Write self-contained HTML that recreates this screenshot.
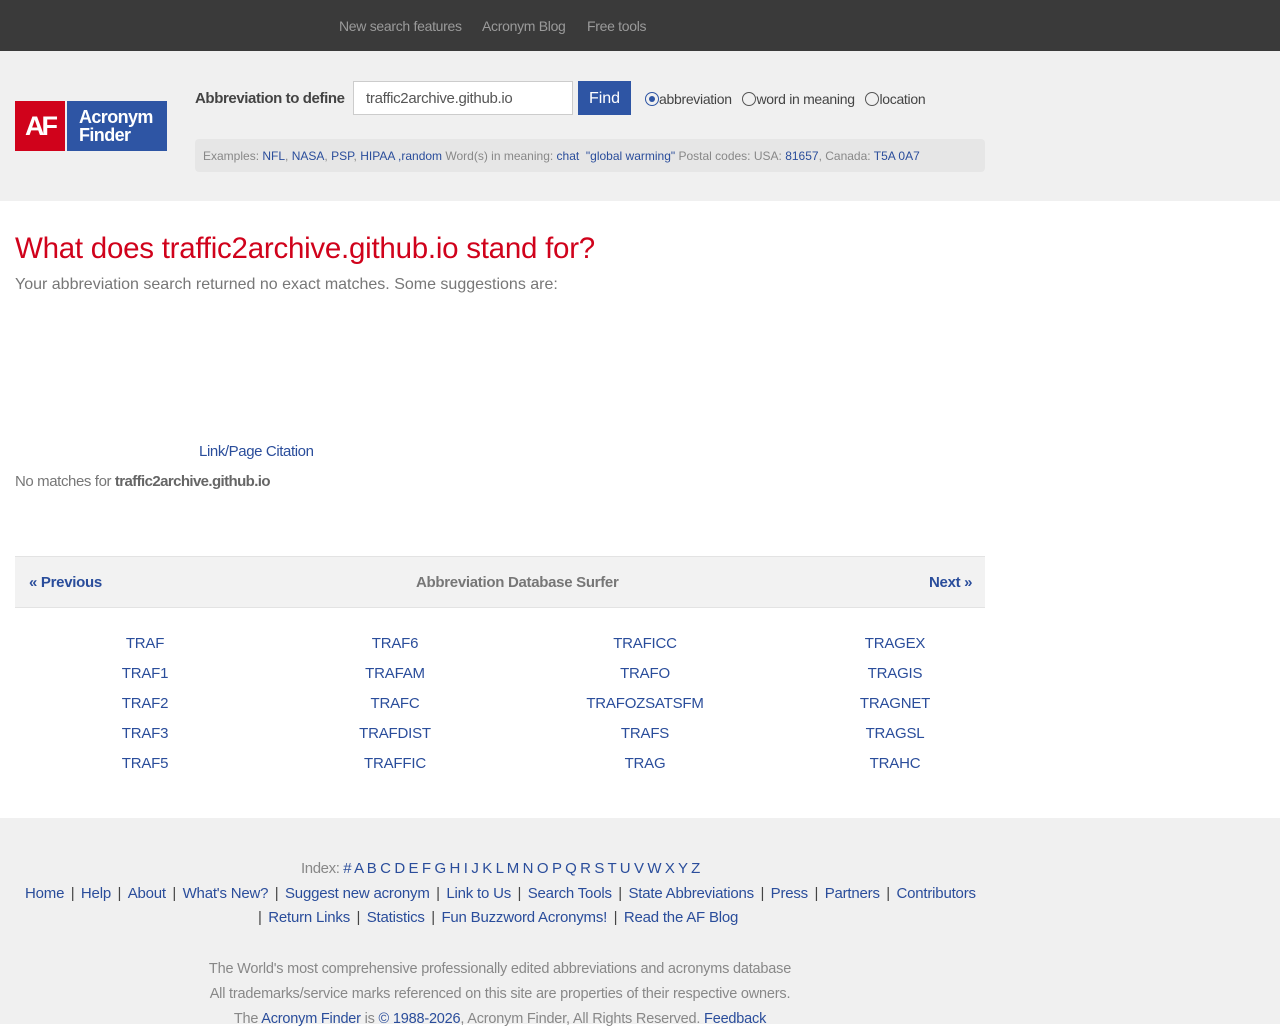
<!DOCTYPE html>
<html><head><meta charset="utf-8"><style>
*{margin:0;padding:0;box-sizing:border-box}
body{width:1280px;height:1024px;overflow:hidden;font-family:"Liberation Sans",Arial,sans-serif;background:#fff;position:relative;color:#666}
a{color:#2a4d9b;text-decoration:none}
.abs{position:absolute;white-space:nowrap}
.top{position:absolute;left:0;top:0;width:1280px;height:51px;background:#3a3a3a}
.top span{position:absolute;top:18px;font-size:14px;color:#9a9a9a;letter-spacing:-.3px}
.hdr{position:absolute;left:0;top:51px;width:1280px;height:150px;background:#f0f0f0}
.foot{position:absolute;left:0;top:818px;width:1280px;height:206px;background:#f0f0f0}
.grid a{position:absolute;font-size:15px;transform:translateX(-50%);white-space:nowrap;letter-spacing:-.2px}
.links{font-size:15px;letter-spacing:-.4px;color:#444}
.links a{color:#2a4d9b}
.sep{color:#444;margin:0 6px}
.l2{letter-spacing:-.2px}
.l2 .sep{margin:0 6.5px}
</style></head><body>
<div class="top"><span style="left:339px">New search features</span><span style="left:482px">Acronym Blog</span><span style="left:587px">Free tools</span></div>
<div class="hdr"></div>
<div class="abs" style="left:15px;top:101px;width:50px;height:50px;background:#d0021b;color:#fff;font-weight:bold;font-size:27px;letter-spacing:-3px;line-height:50px;text-align:center">AF</div>
<div class="abs" style="left:67px;top:101px;width:100px;height:50px;background:#2e55a4;color:#fff;font-weight:bold;font-size:18px;line-height:18px;padding:7px 0 0 12px;letter-spacing:-.6px">Acronym<br>Finder</div>
<div class="abs" style="left:195px;top:90px;font-size:15px;font-weight:bold;color:#444;letter-spacing:-.4px">Abbreviation to define</div>
<div class="abs" style="left:353px;top:81px;width:220px;height:34px;background:#fff;border:1px solid #ccc;font-size:15px;color:#555;padding:8px 12px;letter-spacing:-.3px">traffic2archive.github.io</div>
<div class="abs" style="left:578px;top:81px;width:53px;height:34px;background:#2e55a4;color:#fff;font-size:16px;line-height:36px;text-align:center">Find</div>
<div class="abs" style="left:645px;top:91px;font-size:14px;color:#444;letter-spacing:-.3px">
<span style="display:inline-block;width:14px;height:14px;border:1.5px solid #2e55a4;border-radius:50%;vertical-align:-2px;position:relative"><span style="position:absolute;left:2.5px;top:2.5px;width:6px;height:6px;border-radius:50%;background:#2e55a4"></span></span>abbreviation &nbsp;
<span style="display:inline-block;width:14px;height:14px;border:1.5px solid #555;border-radius:50%;vertical-align:-2px"></span>word in meaning &nbsp;
<span style="display:inline-block;width:14px;height:14px;border:1.5px solid #555;border-radius:50%;vertical-align:-2px"></span>location</div>
<div class="abs" style="left:195px;top:139px;width:790px;height:33px;background:#e6e6e6;border-radius:4px;font-size:12px;color:#888;padding:10px 8px">Examples: <a>NFL</a>, <a>NASA</a>, <a>PSP</a>, <a>HIPAA</a> <a>,random</a> Word(s) in meaning: <a>chat</a> &nbsp;<a>"global warming"</a> Postal codes: USA: <a>81657</a>, Canada: <a>T5A 0A7</a></div>
<div class="abs" style="left:15px;top:232px;font-size:29.5px;color:#d0021b;letter-spacing:-.25px">What does traffic2archive.github.io stand for?</div>
<div class="abs" style="left:15px;top:276px;font-size:16px;color:#777">Your abbreviation search returned no exact matches. Some suggestions are:</div>
<div class="abs" style="left:199px;top:443px;font-size:15px;letter-spacing:-.4px"><a>Link/Page Citation</a></div>
<div class="abs" style="left:15px;top:473px;font-size:15px;color:#777;letter-spacing:-.4px">No matches for <b style="color:#666;letter-spacing:-.6px">traffic2archive.github.io</b></div>
<div class="abs" style="left:15px;top:556px;width:970px;height:52px;background:#f2f2f2;border-top:1px solid #e3e3e3;border-bottom:1px solid #e3e3e3"></div>
<div class="abs" style="left:29px;top:574px;font-size:15px;font-weight:bold;letter-spacing:-.3px"><a>« Previous</a></div>
<div class="abs" style="left:416px;top:574px;font-size:15px;font-weight:bold;color:#777;letter-spacing:-.3px">Abbreviation Database Surfer</div>
<div class="abs" style="left:929px;top:574px;font-size:15px;font-weight:bold;letter-spacing:-.3px"><a>Next »</a></div>
<div class="grid">
<a style="left:145px;top:635px">TRAF</a><a style="left:145px;top:665px">TRAF1</a><a style="left:145px;top:695px">TRAF2</a><a style="left:145px;top:725px">TRAF3</a><a style="left:145px;top:755px">TRAF5</a>
<a style="left:395px;top:635px">TRAF6</a><a style="left:395px;top:665px">TRAFAM</a><a style="left:395px;top:695px">TRAFC</a><a style="left:395px;top:725px">TRAFDIST</a><a style="left:395px;top:755px">TRAFFIC</a>
<a style="left:645px;top:635px">TRAFICC</a><a style="left:645px;top:665px">TRAFO</a><a style="left:645px;top:695px">TRAFOZSATSFM</a><a style="left:645px;top:725px">TRAFS</a><a style="left:645px;top:755px">TRAG</a>
<a style="left:895px;top:635px">TRAGEX</a><a style="left:895px;top:665px">TRAGIS</a><a style="left:895px;top:695px">TRAGNET</a><a style="left:895px;top:725px">TRAGSL</a><a style="left:895px;top:755px">TRAHC</a>
</div>
<div class="foot"></div>
<div class="abs links" style="left:301px;top:860px;color:#888">Index: <a>#</a> <a>A</a> <a>B</a> <a>C</a> <a>D</a> <a>E</a> <a>F</a> <a>G</a> <a>H</a> <a>I</a> <a>J</a> <a>K</a> <a>L</a> <a>M</a> <a>N</a> <a>O</a> <a>P</a> <a>Q</a> <a>R</a> <a>S</a> <a>T</a> <a>U</a> <a>V</a> <a>W</a> <a>X</a> <a>Y</a> <a>Z</a></div>
<div class="abs links l2" style="left:25px;top:885px"><a>Home</a><span class="sep">|</span><a>Help</a><span class="sep">|</span><a>About</a><span class="sep">|</span><a>What's New?</a><span class="sep">|</span><a>Suggest new acronym</a><span class="sep">|</span><a>Link to Us</a><span class="sep">|</span><a>Search Tools</a><span class="sep">|</span><a>State Abbreviations</a><span class="sep">|</span><a>Press</a><span class="sep">|</span><a>Partners</a><span class="sep">|</span><a>Contributors</a></div>
<div class="abs links l2" style="left:258px;top:909px"><span class="sep" style="margin-left:0">|</span><a>Return Links</a><span class="sep">|</span><a>Statistics</a><span class="sep">|</span><a>Fun Buzzword Acronyms!</a><span class="sep">|</span><a>Read the AF Blog</a></div>
<div class="abs" style="left:0;width:1000px;text-align:center;top:957px;font-size:14.5px;color:#888;line-height:25px;letter-spacing:-.2px">The World's most comprehensive professionally edited abbreviations and acronyms database<br>All trademarks/service marks referenced on this site are properties of their respective owners.<br>The <a>Acronym Finder</a> is <a>© 1988-2026</a>, Acronym Finder, All Rights Reserved. <a>Feedback</a></div>
</body></html>
